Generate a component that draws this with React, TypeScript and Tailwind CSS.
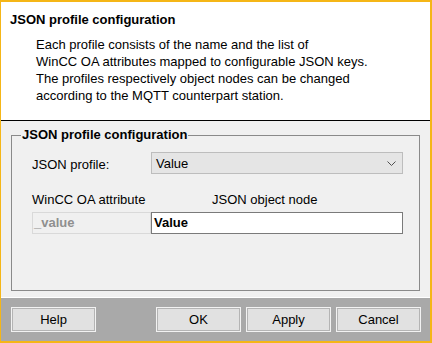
const font = { fontFamily: '"Liberation Sans", Arial, sans-serif' };

const Chevron = () => (
  <svg width="9" height="5" viewBox="0 0 9 5" className="shrink-0">
    <path d="M0.5 0.5 L4.5 4.5 L8.5 0.5" fill="none" stroke="#505050" strokeWidth="1" />
  </svg>
);

const DialogButton = ({ label }: { label: string }) => (
  <button className="w-[85px] h-[25px] border border-[#f2f2f2] bg-[#e1e1e1] shadow-[inset_0_0_0_1px_#b4b4b4] text-[13px] leading-[16px] text-black flex items-center justify-center">
    {label}
  </button>
);

export default function App() {
  return (
    <div
      style={font}
      className="w-[432px] h-[343px] flex flex-col border-l border-r-2 border-t-2 border-b-2 border-[#f5b617] bg-[#f0f0f0] text-black"
    >
      <div className="h-[118px] bg-white pl-[9px] pt-[10px]">
        <div className="text-[13px] leading-[16px] font-bold">JSON profile configuration</div>
        <div className="mt-[8px] pl-[26px] text-[13px] leading-[17px]">
          <p>Each profile consists of the name and the list of</p>
          <p>WinCC OA attributes mapped to configurable JSON keys.</p>
          <p>The profiles respectively object nodes can be changed</p>
          <p>according to the MQTT counterpart station.</p>
        </div>
      </div>
      <div className="h-px bg-black" />

      <div className="h-[176px] pt-[14px] pl-[10px] pr-[10px]">
        <div className="relative h-[156px] border border-[#8a8a8a] pl-[20px] pr-[16px] pt-[16px]">
          <span className="absolute -top-[9px] left-[9px] bg-[#f0f0f0] px-[1px] text-[13px] leading-[16px] font-bold">
            JSON profile configuration
          </span>
          <div className="flex items-start">
            <span className="w-[119px] mt-[5px] text-[13px] leading-[16px]">JSON profile:</span>
            <div className="flex-1 h-[22px] border border-[#bdbdbd] bg-[#e5e5e5] pl-[4px] pr-[6px] flex items-center justify-between">
              <span className="text-[13px] leading-[16px] mt-[2px]">Value</span>
              <Chevron />
            </div>
          </div>
          <div className="flex mt-[18px] text-[13px] leading-[16px]">
            <span className="w-[119px]">WinCC OA attribute</span>
            <span className="ml-[61px]">JSON object node</span>
          </div>
          <div className="flex mt-[4px] h-[22px]">
            <div className="w-[119px] border border-[#d9d9d9] bg-[#f0f0f0] pl-[1px] flex items-center">
              <span className="text-[13px] leading-[16px] font-bold text-[#8f8f8f]">_value</span>
            </div>
            <div className="flex-1 border border-[#7a7a7a] bg-white pl-[2px] flex items-center">
              <span className="text-[13px] leading-[16px] font-bold">Value</span>
            </div>
          </div>
        </div>
      </div>

      <div className="h-px bg-white" />
      <div className="flex-1 bg-[#a9a9a9] pt-[9px] pl-[10px] pr-[9px] flex items-start">
        <DialogButton label="Help" />
        <div className="flex-1" />
        <div className="flex gap-[5px]">
          <DialogButton label="OK" />
          <DialogButton label="Apply" />
          <DialogButton label="Cancel" />
        </div>
      </div>
    </div>
  );
}
